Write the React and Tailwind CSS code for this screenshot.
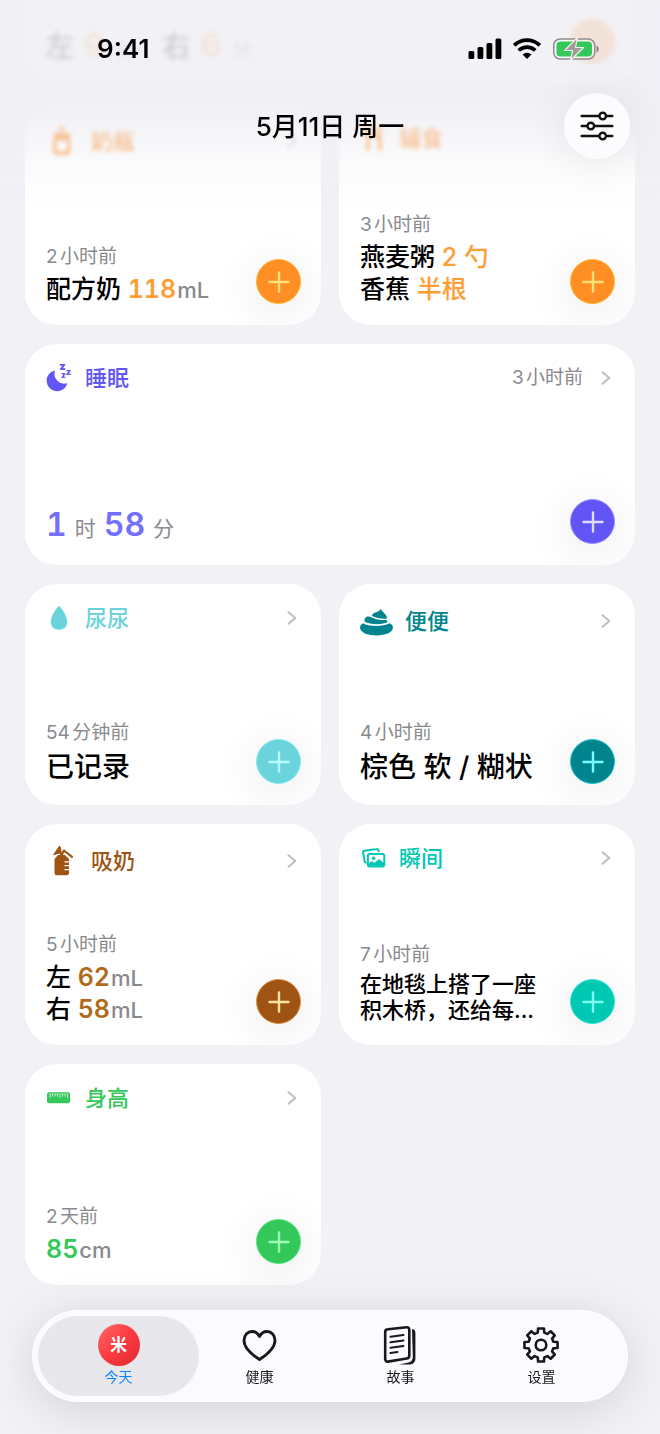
import React from "react";
import clsx from "clsx";

/* ---------- Icons ---------- */

const BottleIcon = () => (
  <svg viewBox="0 0 34 34" className="h-[34px] w-[34px]" fill="none" stroke="currentColor" strokeWidth="3">
    <path d="M12.5 8 C14.5 7 14.5 5 15 2 H18.5 C19 5 19 7 21 8Z" fill="currentColor" stroke="none" />
    <path d="M10 11H24" strokeWidth="4" strokeLinecap="round" />
    <rect x="9.8" y="13" width="14" height="16" rx="2.5" />
    <path d="M11 15h12" />
  </svg>
);

const FoodIcon = () => (
  <svg viewBox="0 0 28 28" className="h-7 w-7" fill="none" stroke="currentColor" strokeWidth="3" strokeLinecap="round">
    <path d="M9 3v22M5 3v6c0 3 8 3 8 0V3M21 25V3c-3 2-4 6-4 11h4" />
  </svg>
);

const SleepIcon = () => (
  <svg viewBox="0 0 28 28" className="h-7 w-7 overflow-visible" fill="currentColor">
    <path d="M10 6.5A10.5 10.5 0 1 0 22.3 19.3A10 10 0 0 1 10 6.5Z" />
    <g className="font-['Inter'] font-black" textAnchor="middle">
      <text x="17.5" y="5.5" fontSize="11">z</text>
      <text x="23.3" y="10.5" fontSize="9">z</text>
      <text x="18.3" y="14.2" fontSize="8">z</text>
    </g>
  </svg>
);

const DropIcon = () => (
  <svg viewBox="0 0 28 28" className="h-7 w-7" fill="currentColor">
    <path d="M14 2C15 2 22.3 11.5 22.3 17.7C22.3 22.7 18.7 25.7 14 25.7C9.3 25.7 5.7 22.7 5.7 17.7C5.7 11.5 13 2 14 2Z" />
  </svg>
);

const PoopIcon = () => (
  <svg viewBox="0 0 34 34" className="h-[34px] w-[34px]" fill="currentColor">
    <path d="M21.8 4.8C22.3 8 27.8 9 28 14.8C22 15.2 16.5 13.8 12.8 11.8C14 7.500 20 9 21.8 4.8Z" />
    <path d="M5.5 17.5C5 14 7.5 11.3 11 12.8C14.5 14.300 19 16.300 25.5 16C28.3 15.9 29.500 17.6 27.5 18.8C21 21 10.5 20.5 5.5 17.5Z" />
    <path d="M4 19.3C9 22.6 24 23 30.5 19.3C35 21 35 25.5 31 28.3C25 32.5 9 32.5 4 28.3C0 25.5 0 21.5 4 19.3Z" />
  </svg>
);

const PumpIcon = () => (
  <svg viewBox="0 0 34 34" className="h-[34px] w-[34px]" fill="currentColor">
    <path d="M14.300 2.300C15.500 2.300 16 5 16 8.500L8.700 10.700Z" stroke="currentColor" strokeWidth="1" strokeLinejoin="round" />
    <path d="M14 7.500L17.500 11.500M17 10L19 6.500L27 12.800" fill="none" stroke="currentColor" strokeWidth="2.200" strokeLinecap="round" strokeLinejoin="round" />
    <path d="M13 11H20L24 15V29a2.300 2.300 0 0 1-2.300 2.300H11.800a2.300 2.300 0 0 1-2.300-2.300V15Z" />
    <path d="M19.500 17.800h5M19.500 21.700h5M19.500 25.600h5" stroke="#fff" strokeWidth="1.200" />
  </svg>
);

const PhotoIcon = () => (
  <svg viewBox="0 0 28 28" className="h-7 w-7" fill="none" stroke="currentColor" strokeWidth="2" strokeLinejoin="round" strokeLinecap="round">
    <path d="M19.6 7.2L19.3 6.2a1.6 1.6 0 0 0-1.8-1.1L5.4 6.7a1.6 1.6 0 0 0-1.3 1.9L5.6 17.4a1.6 1.6 0 0 0 1.2 1.3" />
    <rect x="8.9" y="10" width="16.400" height="12.400" rx="2" />
    <circle cx="14.6" cy="14.2" r="1.8" fill="currentColor" stroke="none" />
    <path d="M9.5 19.500l3.5-2.6 2.6 1.8 4.4-3.8 5 4.300v2.600h-15.500z" fill="currentColor" stroke="none" />
  </svg>
);

const RulerIcon = () => (
  <svg viewBox="0 0 28 28" className="h-7 w-7" fill="currentColor">
    <rect x="2" y="8.300" width="23" height="11" rx="2" />
    <path d="M4 10h19" stroke="#fff" strokeOpacity="0.5" strokeWidth="0.8" />
    <path d="M5 10v4M7.500 10v2.500M10 10v2.500M12.500 10v2.500M15 10v4M17.500 10v2.500M20 10v2.500M22.500 10v4" stroke="#fff" strokeOpacity="0.8" strokeWidth="0.900" />
  </svg>
);

const ChevronIcon = () => (
  <svg viewBox="0 0 10 16" className="h-4 w-[10px] text-[#bfbfc3]" fill="none" stroke="currentColor" strokeWidth="2" strokeLinecap="round" strokeLinejoin="round">
    <path d="M1.500 2.200L8.300 8L1.500 13.800" />
  </svg>
);

const HeartIcon = () => (
  <svg viewBox="0 0 42 42" className="h-[42px] w-[42px]" fill="none" stroke="currentColor" strokeWidth="2.800" strokeLinejoin="round">
    <path d="M20.500 35.500C13.500 31 5 24 5 16.500C5 11 8.500 7.500 13 7.500C16.500 7.500 19 9.500 20.500 12.500C22 9.500 24.500 7.500 28 7.500C32.500 7.500 36 11 36 16.500C36 24 27.500 31 20.500 35.500Z" />
  </svg>
);

const StoryIcon = () => (
  <svg viewBox="0 0 42 42" className="h-[42px] w-[42px]" fill="none" stroke="currentColor" strokeLinecap="round" strokeLinejoin="round">
    <path d="M8 5.200L26.500 3.200a2.500 2.500 0 0 1 2.800 2.500V31.500a3 3 0 0 1-2.700 3L8 37.600a2.500 2.500 0 0 1-2.800-2.500V8a2.800 2.800 0 0 1 2.800-2.800Z" strokeWidth="2.600" />
    <path d="M32 5C34.500 5.500 35.400 6.500 35.400 9V34C35.400 38 33.500 40.200 30 40.400L19 40.600L28.500 38.500C31.500 37.800 32.800 36 32.800 33Z" fill="currentColor" stroke="none" />
    <path d="M10.500 12.700L23.500 10.900M10.500 18.300L23.500 16.500M10.500 23.700L23.500 21.900M10.500 29L17.500 28" strokeWidth="2" />
  </svg>
);

const gearPath = () => {
  const at = (r, deg) => {
    const a = (deg * Math.PI) / 180;
    return `${(20 + r * Math.sin(a)).toFixed(2)} ${(21 - r * Math.cos(a)).toFixed(2)}`;
  };
  const points = [];
  for (let i = 0; i < 8; i++) {
    const c = i * 45;
    points.push(at(12.8, c - 15), at(16.8, c - 10), at(16.8, c + 10), at(12.8, c + 15));
  }
  return "M" + points.join("L") + "Z";
};

const GearIcon = () => (
  <svg viewBox="0 0 42 42" className="h-[42px] w-[42px]" fill="none" stroke="currentColor" strokeWidth="2.600" strokeLinejoin="round">
    <path d={gearPath()} />
    <circle cx="20" cy="21" r="5.300" />
  </svg>
);

const SlidersIcon = () => (
  <svg viewBox="0 0 34 34" className="h-[34px] w-[34px]" fill="none" stroke="currentColor" strokeWidth="2.400" strokeLinecap="round">
    <path d="M1.700 7H32.300M1.700 17H32.300M1.700 27H32.300" />
    <g fill="#fff">
      <circle cx="22.700" cy="7" r="3.300" />
      <circle cx="10.800" cy="17" r="3.300" />
      <circle cx="22.700" cy="27" r="3.300" />
    </g>
  </svg>
);

const SignalIcon = () => (
  <svg viewBox="0 0 34 22" className="h-[22px] w-[34px]" fill="currentColor">
    <rect x="0.500" y="13" width="5.800" height="8" rx="1.500" />
    <rect x="9.500" y="9" width="5.800" height="12" rx="1.500" />
    <rect x="18.500" y="5" width="5.800" height="16" rx="1.500" />
    <rect x="27.500" y="0.500" width="5.800" height="20.500" rx="1.500" />
  </svg>
);

const WifiIcon = () => (
  <svg viewBox="0 0 28 22" className="h-[22px] w-7" fill="none" stroke="currentColor" strokeWidth="3.800">
    <path d="M1.200 7.300A18.500 18.500 0 0 1 26.800 7.300" />
    <path d="M5.700 12.500A12 12 0 0 1 22.300 12.500" />
    <path d="M9.600 16.500A6.500 6.500 0 0 1 18.400 16.500L14 21Z" fill="currentColor" stroke="none" />
  </svg>
);

const BatteryIcon = () => (
  <svg viewBox="0 0 48 24" className="h-6 w-12">
    <rect x="1.700" y="2" width="41" height="20" rx="6.500" fill="#fff" fillOpacity="0.500" stroke="#8f8c8d" strokeWidth="1.500" />
    <rect x="4.500" y="4.500" width="35.500" height="15" rx="4" fill="#34c759" />
    <path d="M44.500 8.500C47.500 9.500 47.500 14.500 44.500 15.500Z" fill="#8a8583" />
    <path d="M25.500 0.500L12.500 13.500H20.500L18.500 23.500L31.500 10.500H23.500Z" fill="#a39b97" stroke="#f4f2f3" strokeWidth="1.200" strokeLinejoin="round" />
  </svg>
);

/* ---------- Building blocks ---------- */

const AddButton = ({ label, className }) => (
  <button
    type="button"
    aria-label={label}
    className={clsx("mb-px flex h-[45px] w-[45px] shrink-0 items-center justify-center rounded-full border shadow-[0_8px_40px_8px_rgba(0,0,0,0.06)]", className)}
  >
    <svg viewBox="0 0 22 22" className="h-[22px] w-[22px]" fill="none" stroke="currentColor" strokeWidth="2.400" strokeLinecap="round">
      <path d="M11 1.500V20.500M1.500 11H20.500" />
    </svg>
  </button>
);

const Card = ({ icon, title, color, time, ago, addClass, wide, children }) => (
  <section className={clsx("flex min-h-[221px] flex-col justify-between overflow-hidden rounded-[32px] bg-white p-5", wide && "col-span-2")}>
    <header className="flex items-center gap-3 pr-1">
      <span className={color}>{icon}</span>
      <h2 className={clsx("flex-1 text-[22px] leading-7 font-medium", color)}>{title}</h2>
      {time && <span className="mr-[6px] text-[19px] leading-6 text-[#8a8a8e]">{time}</span>}
      <ChevronIcon />
    </header>
    <div className="flex items-end justify-between pl-px">
      <div className="min-w-0">
        {ago && <p className="mb-1 text-[19px] leading-6 text-[#8a8a8e]">{ago}</p>}
        {children}
      </div>
      <AddButton label={`添加${title}`} className={addClass} />
    </div>
  </section>
);

const Line = ({ children }) => <p className="text-[25px] leading-8 font-medium text-black">{children}</p>;

const Num = ({ className, children }) => <span className={clsx("leading-none font-semibold tabular-nums", className)}>{children}</span>;

const Unit = ({ children }) => <span className="ml-px text-[22px] leading-none text-[#8a8a8e]">{children}</span>;

const Small = ({ className, children }) => <span className={clsx("text-[21px] leading-none font-normal text-[#8a8a8e]", className)}>{children}</span>;

const tabs = [
  { name: "健康", icon: <HeartIcon /> },
  { name: "故事", icon: <StoryIcon /> },
  { name: "设置", icon: <GearIcon /> },
];

const App = () => {
  return (
    <div className="min-h-screen bg-[#f2f1f6] font-['Inter','Noto_Sans_CJK_SC',sans-serif] [text-autospace:normal]">
      <main className="grid grid-cols-2 gap-x-[18px] gap-y-[19px] px-[25px] pb-36">
        {/* Nursing card, scrolled mostly out of view */}
        <section className="col-span-2 flex h-[85px] items-end justify-between overflow-hidden rounded-b-[32px] bg-white p-5">
          <p className="flex items-baseline gap-[10px] text-[29px] leading-9 font-medium text-black">
            左 <Num className="text-[32px] text-[#ff9d33]">9</Num>
            <Small className="mr-4">分</Small>
            右 <Num className="text-[32px] text-[#ff9d33]">6</Num>
            <Small>分</Small>
          </p>
          <AddButton label="添加母乳" className="border-[#ffb52e] bg-[#ff8e25] text-[#ff8e25]" />
        </section>

        <Card icon={<BottleIcon />} title="奶瓶" color="text-[#ff8e25]" ago="2小时前" addClass="border-[#ffb52e] bg-[#ff8e25] text-[#ffe27a]">
          <Line>
            配方奶 <Num className="text-[#ff9d33]">118</Num><Unit>mL</Unit>
          </Line>
        </Card>

        <Card icon={<FoodIcon />} title="辅食" color="text-[#ff8e25]" ago="3小时前" addClass="border-[#ffb52e] bg-[#ff8e25] text-[#ffe27a]">
          <Line>燕麦粥 <span className="text-[#ff9d33]">2 勺</span></Line>
          <Line>香蕉 <span className="text-[#ff9d33]">半根</span></Line>
        </Card>

        <Card wide icon={<SleepIcon />} title="睡眠" color="text-[#6155f5]" time="3小时前" addClass="border-[#9a8cff] bg-[#6155f5] text-[#e0dcff]">
          <p className="flex h-10 items-baseline gap-2 pt-1 text-[#8a8a8e]">
            <Num className="text-[32px] text-[#7570fb]">1</Num>
            <Small>时</Small>
            <Num className="text-[32px] text-[#7570fb]">58</Num>
            <Small>分</Small>
          </p>
        </Card>

        <Card icon={<DropIcon />} title="尿尿" color="text-[#6bd3dc]" ago="54分钟前" addClass="border-[#7eeaf0] bg-[#6bd3dc] text-[#b5fbff]">
          <p className="text-[28px] leading-9 font-medium text-black">已记录</p>
        </Card>

        <Card icon={<PoopIcon />} title="便便" color="text-[#00858e]" ago="4小时前" addClass="border-[#19c5cb] bg-[#00858e] text-[#7dfbff]">
          <p className="text-[28px] leading-9 font-medium whitespace-nowrap text-black">棕色 软 / 糊状</p>
        </Card>

        <Card icon={<PumpIcon />} title="吸奶" color="text-[#9f5414]" ago="5小时前" addClass="border-[#d69245] bg-[#9f5414] text-[#ffe3a3]">
          <Line>左 <Num className="text-[#b06a1a]">62</Num><Unit>mL</Unit></Line>
          <Line>右 <Num className="text-[#b06a1a]">58</Num><Unit>mL</Unit></Line>
        </Card>

        <Card icon={<PhotoIcon />} title="瞬间" color="text-[#00c8b3]" ago="7小时前" addClass="border-[#2be5d5] bg-[#00c8b3] text-[#7dfff2]">
          <p className="w-[180px] pb-[2px] text-[22px] leading-[26px] font-medium text-black">在地毯上搭了一座积木桥，还给每...</p>
        </Card>

        <Card icon={<RulerIcon />} title="身高" color="text-[#34c759]" ago="2天前" addClass="border-[#4fe67a] bg-[#34c759] text-[#9dffb5]">
          <Line><Num className="text-[#34c759]">85</Num><Unit>cm</Unit></Line>
        </Card>
      </main>

      {/* Top bar over the scrolled list */}
      <div className="fixed inset-x-0 top-0">
        <div className="absolute inset-x-0 top-0 h-[210px] bg-[linear-gradient(to_bottom,rgba(240,239,244,0.86)_0px,rgba(240,239,244,0.86)_110px,rgba(240,239,244,0.8)_120px,rgba(240,239,244,0.5)_142px,rgba(240,239,244,0.2)_170px,rgba(240,239,244,0)_210px)]" />
        <div className="absolute inset-x-0 top-0 h-40 backdrop-blur-[2px]" />
        <div className="absolute inset-x-0 top-0 h-24 backdrop-blur-[1px]" />
        <div className="relative flex h-[93px] items-center justify-between pt-1 pr-[60px] pl-[97px]">
          <span className="text-[26px] leading-8 font-semibold text-black">9:41</span>
          <div className="flex items-center gap-[11px] text-black">
            <SignalIcon />
            <WifiIcon />
            <BatteryIcon />
          </div>
        </div>
        <div className="relative grid grid-cols-[1fr_auto_1fr] items-center px-[30px]">
          <h1 className="col-start-2 pt-[2px] text-[26px] leading-8 font-medium text-black [text-autospace:no-autospace]">5月11日 周一</h1>
          <button
            type="button"
            aria-label="筛选"
            className="flex h-[66px] w-[66px] items-center justify-center justify-self-end rounded-full bg-[#fcfcfe] text-[#111] shadow-[0_4px_40px_rgba(0,0,0,0.08)]"
          >
            <SlidersIcon />
          </button>
        </div>
      </div>

      {/* Tab bar */}
      <nav className="fixed inset-x-8 bottom-8 flex rounded-full border border-white bg-[#fbfaff] p-[5px] text-[#18181b] shadow-[0_8px_50px_rgba(0,0,0,0.13)]">
        <a href="#today" aria-current="page" className="flex flex-1 flex-col items-center gap-[3px] rounded-full bg-[#e8e7ec] pt-2 pb-[11px]">
          <span className="flex h-[42px] w-[42px] items-center justify-center rounded-full bg-linear-to-br from-[#ff6468] via-[#fb3a40] to-[#dc2c30] text-[17px] leading-6 font-bold text-white">
            米
          </span>
          <span className="text-[14px] leading-4 text-[#0a84ff]">今天</span>
        </a>
        {tabs.map((tab) => (
          <a key={tab.name} href={`#${tab.name}`} className="-ml-5 flex flex-1 flex-col items-center gap-[3px] pt-2 pb-[11px]">
            {tab.icon}
            <span className="text-[14px] leading-4">{tab.name}</span>
          </a>
        ))}
      </nav>
    </div>
  );
};

export default App;
